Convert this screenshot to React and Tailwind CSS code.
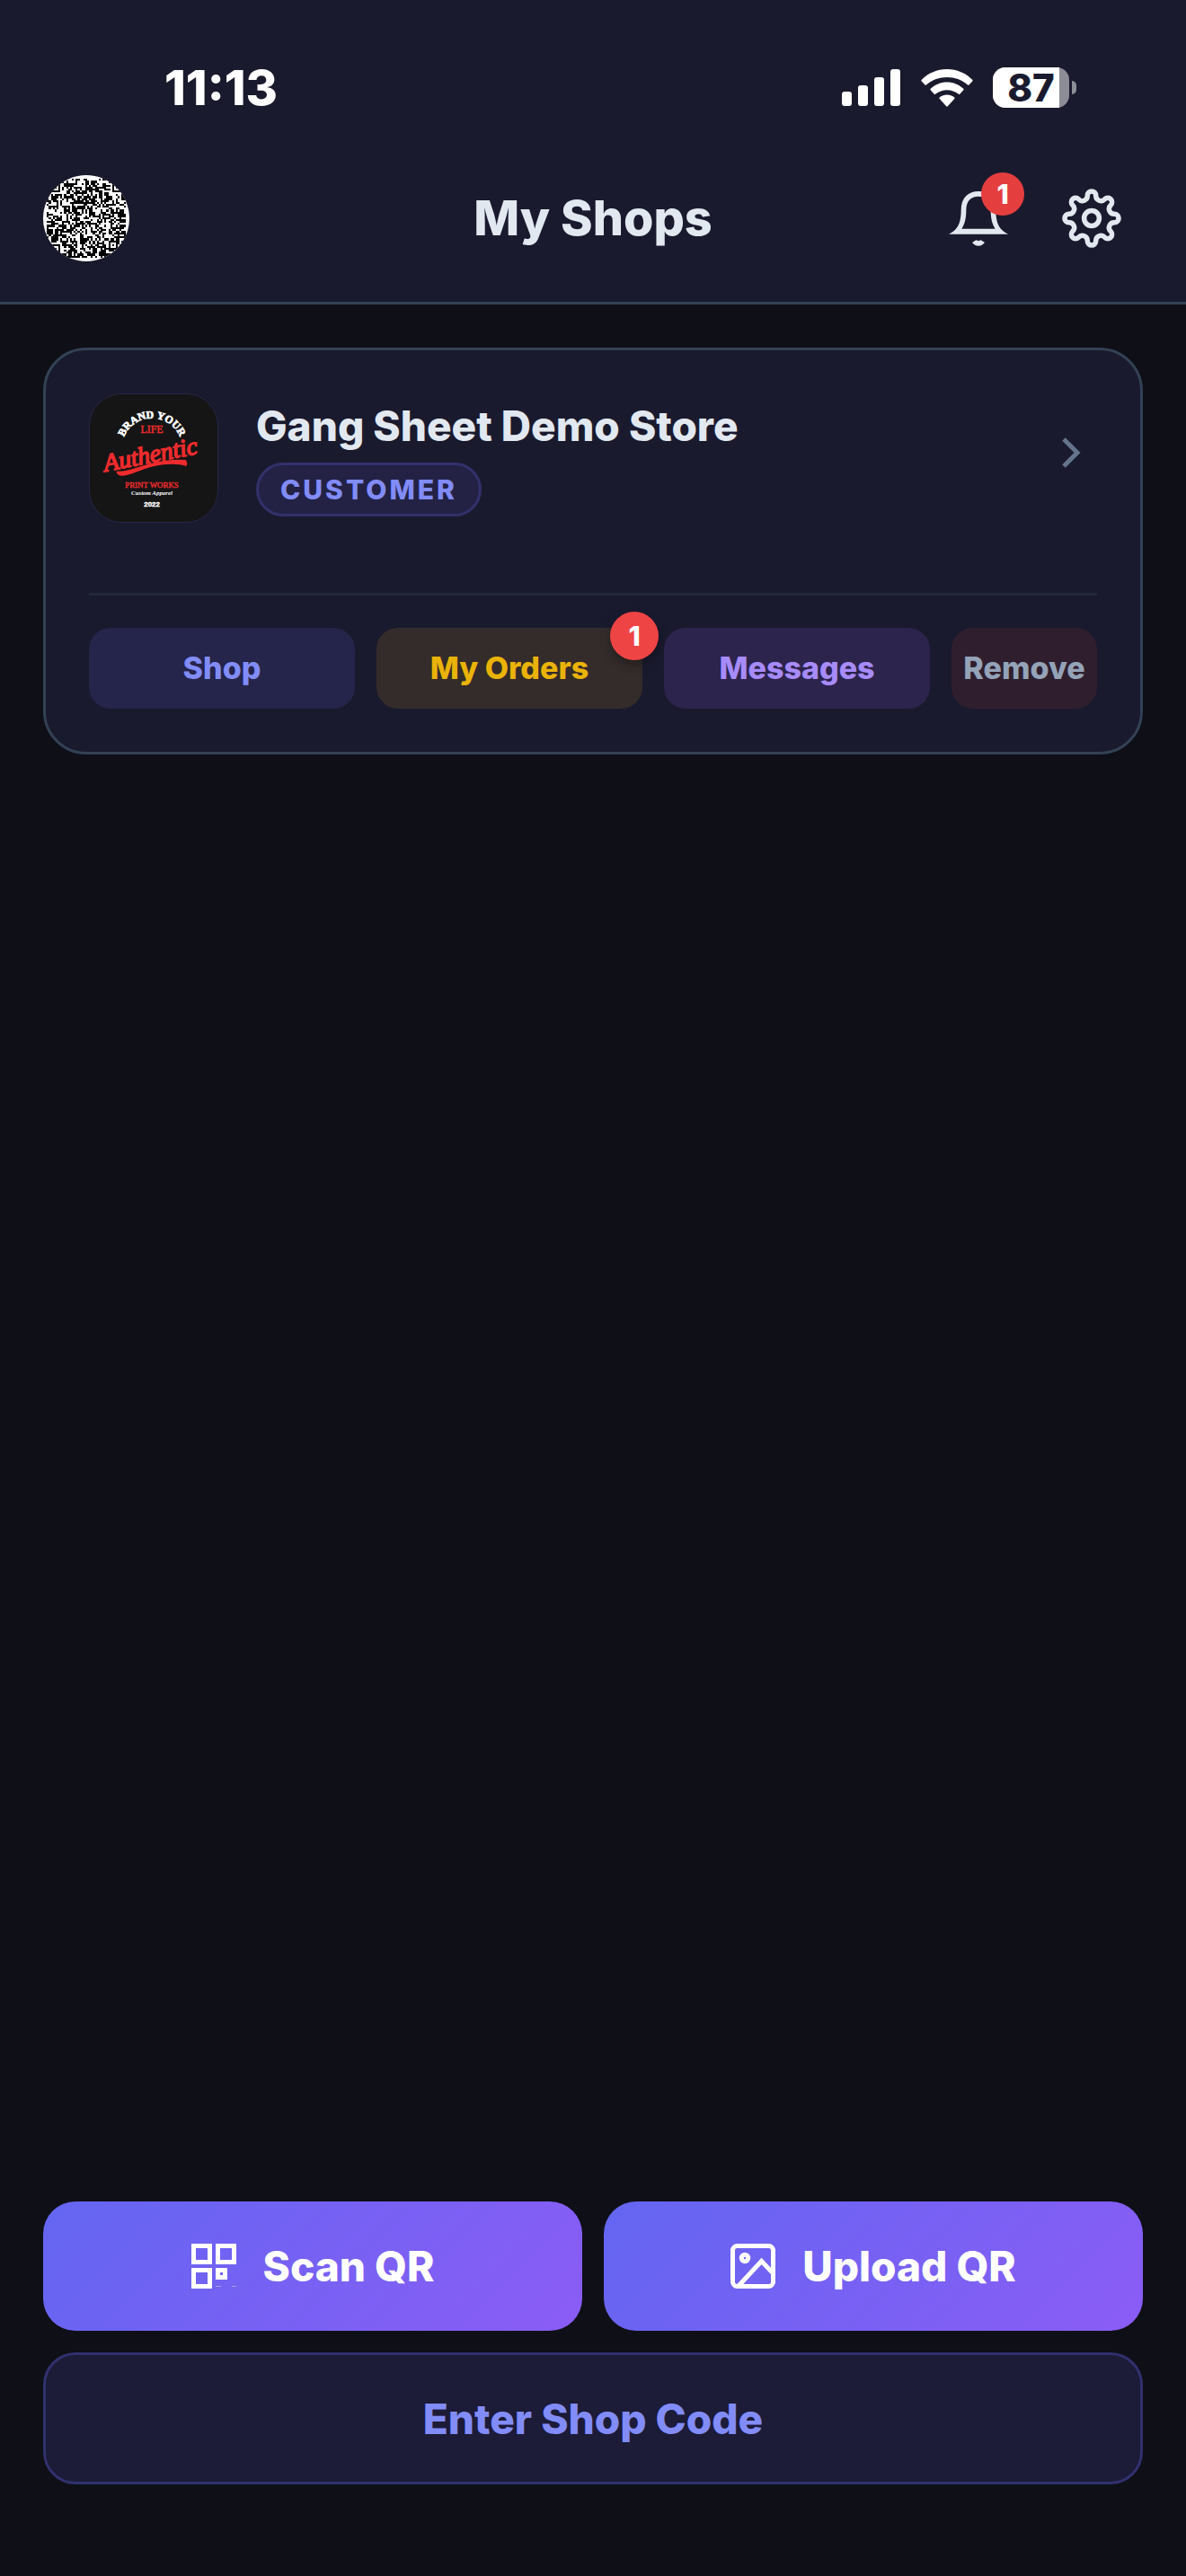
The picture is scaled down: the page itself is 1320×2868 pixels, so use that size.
import { useMemo } from 'react'

// Version 6 code, 41 modules with a two module quiet zone
const QR_SIZE = 41

function finderModule(row, col) {
  if (row > 7 || col > 7) {
    return null
  }

  if (row === 7 || col === 7) {
    return false
  }

  const ring = Math.max(Math.abs(row - 3), Math.abs(col - 3))
  return ring !== 2
}

function buildModules() {
  const modules = []
  let seed = 20257

  for (let row = 0; row < QR_SIZE; row += 1) {
    for (let col = 0; col < QR_SIZE; col += 1) {
      seed = (seed * 16807) % 2147483647
      let dark = seed / 2147483647 < 0.54

      const last = QR_SIZE - 1
      const finder = finderModule(row, col) ?? finderModule(row, last - col) ?? finderModule(last - row, col)
      const align = Math.max(Math.abs(row - 34), Math.abs(col - 34))

      if (finder !== null) {
        dark = finder
      } else if (align <= 2) {
        dark = align !== 1
      }

      if (dark) {
        modules.push(`M${col + 2} ${row + 2}h1v1h-1z`)
      }
    }
  }

  return modules.join('')
}

function QrAvatar() {
  const path = useMemo(() => buildModules(), [])

  return (
    <svg viewBox="0 0 45 45" className="size-24 rounded-full bg-white" shapeRendering="crispEdges" aria-hidden="true">
      <path d={path} fill="#000" />
    </svg>
  )
}

function SignalIcon() {
  return (
    <svg viewBox="0 0 66 42" className="h-[42px] w-[66px]" fill="currentColor" aria-hidden="true">
      <rect x="0" y="25" width="11" height="16" rx="3" />
      <rect x="18" y="18" width="11" height="23" rx="3" />
      <rect x="36" y="9" width="11" height="32" rx="3" />
      <rect x="54" y="0" width="11" height="41" rx="3" />
    </svg>
  )
}

function WifiIcon() {
  return (
    <svg viewBox="0 0 58 42" className="h-[42px] w-[58px]" fill="currentColor" aria-hidden="true">
      <path d="M29 0C40 0 50 4.500 57.300 11.700Q58 12.500 57.300 13.400L53.500 17.500Q52.800 18.200 52 17.500C45.500 11.800 37.500 9 29 9S12.500 11.800 6 17.500Q5.200 18.200 4.500 17.500L.7 13.400Q0 12.500.7 11.700C8 4.500 18 0 29 0Z" />
      <path d="M29 14.500C36 14.500 42.500 17.200 47.300 21.800Q48 22.500 47.300 23.300L43.300 27.800Q42.500 28.400 41.800 27.800C38 24.700 33.700 23.200 29 23.200S20 24.700 16.200 27.800Q15.500 28.400 14.700 27.800L10.700 23.300Q10 22.500 10.700 21.800C15.500 17.200 22 14.500 29 14.500Z" />
      <path d="M29 28.500C32 28.500 35 29.700 37.300 31.500Q38 32.200 37.300 33L29.800 41.300Q29 42 28.200 41.300L20.700 33Q20 32.200 20.700 31.500C23 29.700 26 28.500 29 28.500Z" />
    </svg>
  )
}

function Battery({ level }) {
  return (
    <div className="flex items-center gap-[3px]">
      <div className="relative flex h-[45px] w-[85px] items-center justify-center rounded-[14px] bg-[#8d8d97]">
        <div className="absolute inset-y-0 left-0 rounded-l-[14px] bg-white" style={{ width: `${level}%` }} />
        <span className="relative text-[42px] leading-[45px] font-extrabold text-[#1a1a2e]">{level}</span>
      </div>
      <div className="h-[15px] w-[5px] rounded-r-full bg-[#8d8d97]" />
    </div>
  )
}

function BellIcon() {
  return (
    <svg viewBox="78 127 198 183" className="h-[61px] w-[66px]" fill="currentColor" aria-hidden="true">
      <path
        fillRule="evenodd"
        d="M78 270C106 256 119 236 119 190C119 150 141 127 177 127S235 150 235 190C235 236 248 256 276 270ZM121 252H233C222 236 218 215 218 190C218 160 203 144 177 144S136 160 136 190C136 215 132 236 121 252Z"
      />
      <path d="M156 298L169 290Q177 295 185 290L198 298Q190 309 177 309T156 298Z" />
    </svg>
  )
}

function polar(radius, degrees) {
  const angle = (degrees * Math.PI) / 180
  return `${(radius * Math.cos(angle)).toFixed(2)} ${(radius * Math.sin(angle)).toFixed(2)}`
}

// Eight round lobes joined by inward arcs
const gearPath = [0, 45, 90, 135, 180, 225, 270, 315]
  .map((deg, index) => {
    const start = index === 0 ? `M${polar(25.8, deg - 10.5)}` : ''
    return `${start}A4.700 4.700 0 0 1 ${polar(25.8, deg + 10.5)}A5.700 5.700 0 0 0 ${polar(25.8, deg + 34.5)}`
  })
  .join('')

function GearIcon() {
  return (
    <svg viewBox="-33 -33 66 66" className="size-[66px]" fill="none" stroke="currentColor" strokeWidth="5.500" aria-hidden="true">
      <path d={`${gearPath}Z`} />
      <circle r="8.400" />
    </svg>
  )
}

function StoreLogo() {
  return (
    <svg viewBox="0 0 144 144" className="size-36 shrink-0 rounded-[36px] border border-[#272546] bg-[#151515]" role="img" aria-label="Gang Sheet Demo Store">
      <path id="logo-arc" d="M36 61A34 34 0 0 1 104 61" fill="none" />
      <text fill="#fff" fontFamily="Liberation Serif, serif" fontWeight="700" fontSize="12" stroke="#fff" strokeWidth=".7">
        <textPath href="#logo-arc" startOffset="50%" textAnchor="middle">BRAND YOUR</textPath>
      </text>
      <text x="70" y="44" fill="#ef2b2d" fontFamily="Liberation Serif, serif" fontSize="12" stroke="#ef2b2d" strokeWidth=".5" textAnchor="middle">LIFE</text>
      <text x="70" y="77" transform="rotate(-11 70 77)" fill="#ef2b2d" fontFamily="Liberation Serif, serif" fontSize="28" fontStyle="italic" stroke="#ef2b2d" strokeWidth="1.500" textAnchor="middle">Authentic</text>
      <path d="M30 87C43 88 62 78 84 75Q98 73 108 74Q111 77 109 81C100 78 86 78 73 81C58 84 46 92 35 92Q30 91 30 87Z" fill="#ef2b2d" />
      <text x="70" y="105" fill="#ef2b2d" fontFamily="Liberation Serif, serif" fontSize="9" stroke="#ef2b2d" strokeWidth=".4" textAnchor="middle">PRINT WORKS</text>
      <text x="70" y="114" fill="#fff" fontFamily="Liberation Serif, serif" fontSize="7" fontStyle="italic" fontWeight="700" textAnchor="middle">Custom Apparel</text>
      <text x="70" y="127" fill="#fff" fontFamily="Liberation Sans, sans-serif" fontSize="8" fontWeight="700" stroke="#fff" strokeWidth=".4" textAnchor="middle">2022</text>
    </svg>
  )
}

function ScanIcon() {
  return (
    <svg viewBox="0 0 50 50" className="size-[50px]" fill="none" stroke="currentColor" strokeWidth="5" aria-hidden="true">
      <path d="M2.500 2.500h18v18h-18zM29.500 2.500h18v18h-18zM2.500 29.500h18v18h-18z" />
      <path d="M29.500 29.500h8v8h-8z" />
      <path d="M27 47.500h6M45 47.500h5" strokeWidth="1" opacity=".4" />
    </svg>
  )
}

function ImageIcon() {
  return (
    <svg viewBox="0 0 50 50" className="size-[50px]" fill="none" stroke="currentColor" strokeWidth="5" aria-hidden="true">
      <rect x="2.500" y="2.500" width="45" height="45" rx="5" />
      <circle cx="16" cy="16" r="3.700" />
      <path d="M9 47L34.500 19.500L47 32.500" />
    </svg>
  )
}

const actions = [
  { id: 'shop', label: 'Shop', className: 'flex-1 bg-[#25244a] text-[#818cf8]' },
  { id: 'orders', label: 'My Orders', className: 'flex-1 bg-[#342c2a] text-[#eab308]', count: 1 },
  { id: 'messages', label: 'Messages', className: 'flex-1 bg-[#2c244c] text-[#a78bfa]' },
  { id: 'remove', label: 'Remove', className: 'w-[162px] bg-[#2f1e2e] text-[#94a3b8]' },
]

export default function App() {
  return (
    <div className="flex min-h-screen flex-col bg-[#0f0f17] font-[Inter,sans-serif] text-[#e2e8f0]">
      <header className="border-b-[3px] border-[#334155] bg-[#1a1a2e] pb-[45px]">
        <div className="flex h-[195px] items-center justify-between pr-[122px] pl-[183px] text-white">
          <span className="text-[54px] leading-none font-extrabold">11:13</span>
          <div className="flex items-center gap-[22px]">
            <SignalIcon />
            <WifiIcon />
            <Battery level={87} />
          </div>
        </div>

        <div className="grid grid-cols-[1fr_auto_1fr] items-center px-12">
          <button type="button" aria-label="My QR code" className="justify-self-start rounded-full">
            <QrAvatar />
          </button>
          <h1 className="text-[54px] leading-none font-extrabold">My Shops</h1>
          <div className="flex gap-3 justify-self-end">
            <button type="button" aria-label="Notifications" className="relative flex h-24 w-[114px] items-center justify-center">
              <BellIcon />
              <span className="absolute -top-[3px] right-[6px] flex size-12 items-center justify-center rounded-full bg-[#e53e3e] text-[30px] leading-none font-extrabold text-white">
                1
              </span>
            </button>
            <button type="button" aria-label="Settings" className="flex h-24 w-[114px] items-center justify-center">
              <GearIcon />
            </button>
          </div>
        </div>
      </header>

      <main className="flex-1 px-12 pt-12">
        <section className="rounded-[48px] border-[3px] border-[#334155] bg-[#1a1a2e] p-12">
          <a href="#store" className="flex items-center">
            <StoreLogo />
            <div className="ml-[42px] flex-1">
              <h2 className="text-[46px] leading-[57px] font-extrabold">Gang Sheet Demo Store</h2>
              <span className="mt-3 inline-flex h-[60px] items-center rounded-full border-[3px] border-[#32316b] bg-[#232245] px-6 text-[30px] leading-none font-extrabold tracking-widest text-[#818cf8]">
                CUSTOMER
              </span>
            </div>
            <svg viewBox="0 0 24 36" className="mr-[18px] mb-3 h-9 w-6" fill="none" stroke="#64748b" strokeWidth="5" aria-hidden="true">
              <path d="M5 3L20 18L5 33" />
            </svg>
          </a>

          <div className="mt-[78px] flex gap-6 border-t-[3px] border-[#23273a] pt-9">
            {actions.map((action) => (
              <button
                key={action.id}
                type="button"
                className={`relative h-[90px] rounded-3xl text-[34px] leading-none font-extrabold ${action.className}`}
              >
                {action.label}
                {action.count && (
                  <span className="absolute -top-[18px] -right-[18px] flex size-[54px] items-center justify-center rounded-full bg-[#ef4444] text-[30px] text-white shadow-[0_6px_12px_rgba(0,0,0,0.3)]">
                    {action.count}
                  </span>
                )}
              </button>
            ))}
          </div>
        </section>
      </main>

      <footer className="grid grid-cols-2 gap-6 px-12 pb-[102px] text-[46px] leading-none font-extrabold">
        <button type="button" className="flex h-36 items-center justify-center gap-[30px] rounded-[36px] bg-[linear-gradient(135deg,#6366f1,#8b5cf6)] text-white">
          <ScanIcon />
          Scan QR
        </button>
        <button type="button" className="flex h-36 items-center justify-center gap-[30px] rounded-[36px] bg-[linear-gradient(135deg,#6366f1,#8b5cf6)] text-white">
          <ImageIcon />
          Upload QR
        </button>
        <button type="button" className="col-span-2 h-[147px] rounded-[36px] border-[3px] border-[#30316d] bg-[#1c1b38] text-[#818cf8]">
          Enter Shop Code
        </button>
      </footer>
    </div>
  )
}
